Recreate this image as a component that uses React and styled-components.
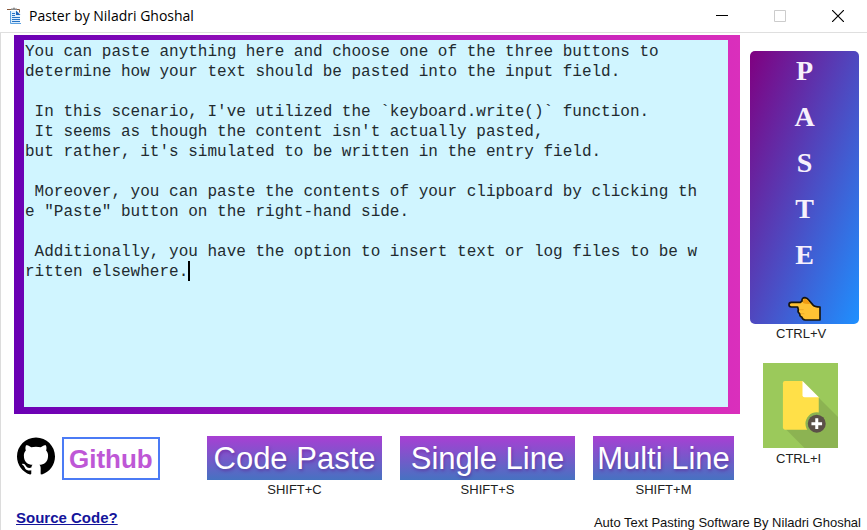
import React from "react";
import styled, { createGlobalStyle } from "styled-components";
import { SiGithub } from "react-icons/si";

const sans = `"Liberation Sans", Arial, sans-serif`;

const GlobalStyle = createGlobalStyle`
  * { box-sizing: border-box; }
  body { margin: 0; background: #fff; font-family: ${sans}; }
  button { font: inherit; border: 0; padding: 0; background: none; cursor: pointer; }
  svg { display: block; }
`;

const Window = styled.div`
  min-height: 100vh;
  display: flex;
  flex-direction: column;
  background: #fff;
`;

const TitleBar = styled.header`
  display: flex;
  align-items: center;
  height: 33px;
  padding-left: 7px;
  border-bottom: 1px solid #dfdfdf;
`;

const Title = styled.h1`
  flex: 1;
  margin: 0 0 0 7px;
  font: 400 14px/20px "Open Sans", "Noto Sans", sans-serif;
  color: #000;
`;

const WindowButton = styled.button`
  width: 58px;
  height: 32px;
  display: grid;
  place-items: center;
  color: ${(p) => (p.disabled ? "#ccc" : "#000")};
`;

const Content = styled.main`
  flex: 1;
  display: flex;
  flex-direction: column;
  border-left: 1px solid #dcdcdc;
`;

const Columns = styled.div`
  display: flex;
  gap: 10px;
  padding: 2px 8px 0 13px;
`;

const Editor = styled.section`
  flex: 1;
  min-width: 0;
`;

const Frame = styled.div`
  padding: 5px 12px 7px 10px;
  background: linear-gradient(90deg, #6a00b4, #b81cbc 60%, #da2fbc);
`;

const Paper = styled.div`
  position: relative;
  display: flex;
  font: 16px/20px "Liberation Mono", "Courier New", monospace;
`;

const TextBox = styled.textarea`
  flex: 1;
  min-width: 0;
  height: 367px;
  padding: 2px 1px;
  border: 0;
  outline: 0;
  resize: none;
  overflow: hidden;
  white-space: pre;
  font: inherit;
  color: #222b30;
  background: #d0f5ff;
`;

const Caret = styled.span`
  position: absolute;
  left: calc(17ch + 1px);
  top: 221px;
  width: 2px;
  height: 20px;
  background: #000;
`;

const Actions = styled.div`
  display: flex;
  justify-content: space-between;
  align-items: flex-start;
  padding: 22px 6px 0 3px;
`;

const GithubGroup = styled.div`
  display: flex;
  align-items: flex-start;
  gap: 7px;
  padding-top: 1px;
`;

const GithubButton = styled.button`
  height: 43px;
  padding: 0 5px;
  border: 2px solid #4b7bf5;
  font: 700 26px/38px ${sans};
  color: #be57d6;
`;

const PasteModes = styled.div`
  display: flex;
  gap: 18px;
`;

const Mode = styled.div`
  display: flex;
  flex-direction: column;
  align-items: center;
`;

const ModeButton = styled.button`
  min-width: ${(p) => (p.$narrow ? "141px" : "175px")};
  height: 44px;
  font: 400 31px/46px ${sans};
  color: #fff;
  text-shadow: 1px 2px 3px rgba(90, 30, 140, 0.5);
  background: linear-gradient(#a83fd3, #4672c1);
`;

const Shortcut = styled.span`
  font: 13px/20px ${sans};
  color: #222;
`;

const Side = styled.aside`
  width: 109px;
  padding-top: 16px;
`;

const PasteButton = styled.button`
  width: 100%;
  height: 273px;
  display: flex;
  flex-direction: column;
  align-items: center;
  gap: 18px;
  padding-top: 6px;
  border-radius: 5px;
  font: 700 28px/28px "Liberation Serif", "Times New Roman", serif;
  color: #f6f0fc;
  background: linear-gradient(to bottom right, purple, dodgerblue);
`;

const PointingHand = styled.svg`
  width: 34px;
  height: 26px;
  margin-top: 9px;
`;

const SideShortcut = styled(Shortcut)`
  display: block;
  padding-left: 26px;
`;

const FileButton = styled.button`
  display: block;
  margin: 19px 0 1px 13px;
`;

const Footer = styled.footer`
  display: flex;
  justify-content: space-between;
  align-items: flex-end;
  margin-top: auto;
  padding: 0 6px 0 15px;
`;

const SourceLink = styled.a`
  margin-bottom: 3px;
  font: 700 15px/18px ${sans};
  color: #14149b;
`;

const Credit = styled.span`
  font: 13px/14px ${sans};
  color: #111;
`;

const initialText = `You can paste anything here and choose one of the three buttons to
determine how your text should be pasted into the input field.

 In this scenario, I've utilized the \`keyboard.write()\` function.
 It seems as though the content isn't actually pasted,
but rather, it's simulated to be written in the entry field.

 Moreover, you can paste the contents of your clipboard by clicking th
e "Paste" button on the right-hand side.

 Additionally, you have the option to insert text or log files to be w
ritten elsewhere.`;

const modes = [
  { label: "Code Paste", shortcut: "SHIFT+C" },
  { label: "Single Line", shortcut: "SHIFT+S" },
  { label: "Multi Line", shortcut: "SHIFT+M", narrow: true },
];

function AppIcon() {
  return (
    <svg width="15" height="18" viewBox="0 0 15 18" aria-hidden="true">
      <path d="M0 2.500h5M8 2.500h4.500v3" fill="none" stroke="#8a5a3c" />
      <path d="M4 3V1.500h2a1 1 0 0 1 2 0h2V3z" fill="#8b8b8b" />
      <path d="M4 4h6l3 3v9H4z" fill="#dcecfb" />
      <path d="M3.500 4v12.500H14" fill="none" stroke="#5aa0e0" />
      <path d="M9 3.500V8h4.500z" fill="#1c62b8" />
      <path d="M5 6.500h3M5 8.500h3M5 10.500h8M5 12.500h8M5 14.500h8" stroke="#2672c4" />
    </svg>
  );
}

function HandIcon() {
  return (
    <PointingHand viewBox="0 0 102 78" preserveAspectRatio="none" aria-hidden="true">
      <path
        d="M10 19H37L42 15Q41 5 51 5Q58 6 63 13L76 28Q80 32 96 33V72H52Q43 71 42 64Q34 61 35 53Q28 49 31 41L29 33H10Q3 32 3 26Q3 19 10 19Z"
        fill="#ffc234"
        stroke="#17150f"
        strokeWidth="5"
        strokeLinejoin="round"
      />
      <path d="M45 15Q45 8 51 8Q57 9 61 15L66 23Q56 25 45 21Z" fill="#f09a12" />
      <path d="M34 41h13M38 53h11" stroke="#e5a021" strokeWidth="2" />
    </PointingHand>
  );
}

function FileIcon() {
  return (
    <svg width="75" height="85" viewBox="0 0 226 255" preserveAspectRatio="none" aria-hidden="true">
      <path d="M0 0H226V255H0z" fill="#9bc95b" />
      <path d="M168 104 226 162V255H125L66 196z" fill="#8cb352" />
      <path d="M66 54H119L168 103V200H66Q60 200 60 193V61Q60 54 66 54Z" fill="#ffe048" />
      <path d="M119 54 168 103H125Q119 103 119 97Z" fill="#fff" />
      <circle cx="162" cy="182" r="34" fill="#8cb352" />
      <circle cx="162" cy="182" r="27" fill="#5b5048" />
      <path d="M162 166v32M146 182h32" stroke="#fff" strokeWidth="9" />
    </svg>
  );
}

export default function App() {
  return (
    <Window>
      <GlobalStyle />
      <TitleBar>
        <AppIcon />
        <Title>Paster by Niladri Ghoshal</Title>
        <WindowButton aria-label="Minimize">
          <svg width="12" height="12" viewBox="0 0 12 12" stroke="currentColor">
            <path d="M0 5.500h12" />
          </svg>
        </WindowButton>
        <WindowButton aria-label="Maximize" disabled>
          <svg width="12" height="12" viewBox="0 0 12 12" fill="none" stroke="currentColor">
            <path d="M.5.5h11v11H.5z" />
          </svg>
        </WindowButton>
        <WindowButton aria-label="Close">
          <svg width="12" height="12" viewBox="0 0 12 12" stroke="currentColor" strokeWidth="1.200">
            <path d="m0 0 12 12M12 0 0 12" />
          </svg>
        </WindowButton>
      </TitleBar>
      <Content>
        <Columns>
          <Editor>
            <Frame>
              <Paper>
                <TextBox aria-label="Text to paste" spellCheck={false} defaultValue={initialText} />
                <Caret />
              </Paper>
            </Frame>
            <Actions>
              <GithubGroup>
                <SiGithub size={38} color="#000" aria-hidden="true" />
                <GithubButton>Github</GithubButton>
              </GithubGroup>
              <PasteModes>
                {modes.map((m) => (
                  <Mode key={m.label}>
                    <ModeButton $narrow={m.narrow}>{m.label}</ModeButton>
                    <Shortcut>{m.shortcut}</Shortcut>
                  </Mode>
                ))}
              </PasteModes>
            </Actions>
          </Editor>
          <Side>
            <PasteButton aria-label="Paste">
              {["P", "A", "S", "T", "E"].map((letter) => (
                <span key={letter}>{letter}</span>
              ))}
              <HandIcon />
            </PasteButton>
            <SideShortcut>CTRL+V</SideShortcut>
            <FileButton aria-label="Insert file">
              <FileIcon />
            </FileButton>
            <SideShortcut>CTRL+I</SideShortcut>
          </Side>
        </Columns>
        <Footer>
          <SourceLink href="#source">Source Code?</SourceLink>
          <Credit>Auto Text Pasting Software By Niladri Ghoshal</Credit>
        </Footer>
      </Content>
    </Window>
  );
}
